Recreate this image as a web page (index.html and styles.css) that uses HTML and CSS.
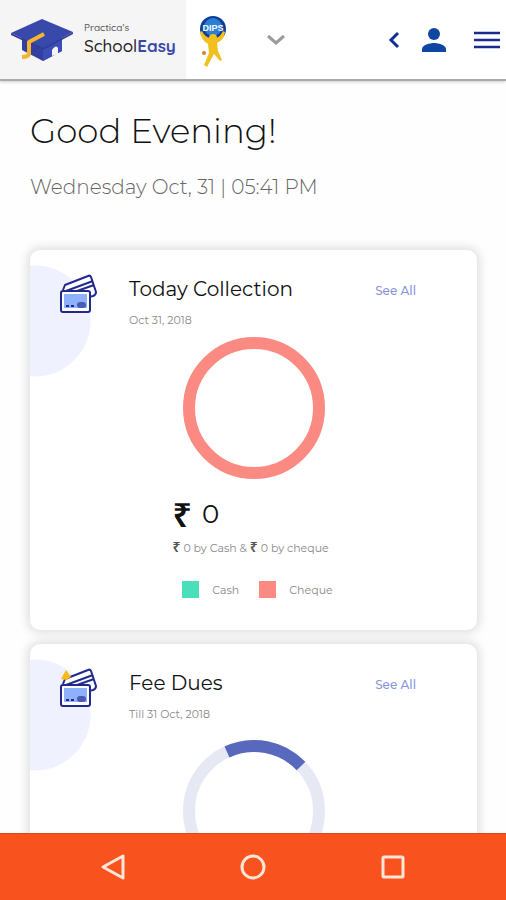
FILE: index.html
```
<!DOCTYPE html>
<html lang="en">
	<head>
		<meta charset="utf-8">
		<meta name="viewport" content="width=device-width, initial-scale=1">
		<title>SchoolEasy</title>
		<link rel="stylesheet" href="styles.css">
	</head>
	<body>

		<!-- header -->
		<header class="topbar">
			<a class="brand" href="#">
				<svg class="brand-cap" viewBox="0 0 64 44" aria-hidden="true">
					<path d="M12 18v14l21 11 19-10V18z" fill="#3440a0"/>
					<path d="M33 24v19l19-10V20z" fill="#3d4db6"/>
					<path d="M42 38v-6q4-6 6-2v6z" fill="#f5f5f5"/>
					<path d="M1 15L32 1l31 13-30 16z" fill="#3949ab"/>
					<path d="M1 15l32 15 30-16v2L33 32 1 17z" fill="#303c9a"/>
					<path d="M34 16l-15 8v12q-1 3-7 3" fill="none" stroke="#f6b52c" stroke-width="4" stroke-linejoin="round"/>
				</svg>
				<span class="brand-text">
					<span class="brand-owner">Practica's</span>
					<span class="brand-name">School<b>Easy</b></span>
				</span>
			</a>
			<svg class="school-logo" viewBox="0 0 28 52" aria-hidden="true">
				<circle cx="14" cy="14" r="13" fill="#0c3c9c"/>
				<circle cx="14" cy="12" r="9" fill="#2a7fd4"/>
				<text class="school-initials" x="14" y="16" text-anchor="middle">DIPS</text>
				<path d="M1 17q1 8 8 12l1 9-5 12 3 2 7-13 6 7 2-1-4-9-1-8q7-3 8-11l-2-1q-3 6-7 7h-6q-5-1-8-7z" fill="#f2c01e"/>
				<circle cx="14" cy="23" r="4" fill="#f2c01e"/>
				<circle cx="5" cy="38" r="2" fill="#e07b2a"/>
			</svg>
			<button class="icon-btn" type="button" aria-label="Choose school">
				<svg width="18" height="12" viewBox="0 0 18 12"><path d="M1 2l8 7 8-7" fill="none" stroke="#9b9b9b" stroke-width="3"/></svg>
			</button>
			<div class="topbar-actions">
				<button class="icon-btn" type="button" aria-label="Back">
					<svg width="12" height="18" viewBox="0 0 12 18"><path d="M10 2L3 9l7 7" fill="none" stroke="#12309a" stroke-width="3"/></svg>
				</button>
				<button class="icon-btn" type="button" aria-label="Profile">
					<svg width="24" height="24" viewBox="0 0 24 24" fill="#0d47a1"><circle cx="12" cy="6" r="6"/><path d="M0 24v-3c0-4 8-6 12-6s12 2 12 6v3z"/></svg>
				</button>
				<button class="icon-btn menu-btn" type="button" aria-label="Menu">
					<svg width="26" height="18" viewBox="0 0 26 18"><path d="M0 2h26M0 9h26M0 16h26" stroke="#1a2a8f" stroke-width="2.6"/></svg>
				</button>
			</div>
		</header>

		<!-- content -->
		<main class="content">
			<h1 class="greeting">Good Evening!</h1>
			<p class="now">Wednesday Oct, 31 | 05:41 PM</p>

			<section class="card">
				<div class="card-head">
					<svg class="card-icon" viewBox="0 0 40 40" aria-hidden="true">
						<g fill="#fff" stroke="#1f2a8c" stroke-width="2" stroke-linejoin="round">
							<path d="M4 16l2-5L29 2q2-1 3 1l5 15q0 3-3 4l-4 1"/>
							<path d="M7 17L34 7M18 17l17-6" fill="none"/>
							<rect x="2" y="17" width="29" height="21" rx="2"/>
						</g>
						<rect x="5" y="20" width="23" height="14" fill="#8fb0fb"/>
						<rect x="18" y="28" width="9" height="6" rx="3" fill="#4a5cb8"/>
						<path d="M7 32h3M12 32h3" stroke="#1f2a8c" stroke-width="2"/>
					</svg>
					<div class="card-titles">
						<h2 class="card-title">Today Collection</h2>
						<p class="card-date">Oct 31, 2018</p>
					</div>
					<a class="see-all" href="#">See All</a>
				</div>
				<svg class="ring" viewBox="0 0 142 142" role="img" aria-label="Collection chart">
					<circle cx="71" cy="71" r="65" fill="none" stroke="#fb8b82" stroke-width="12"/>
				</svg>
				<div class="totals">
					<p class="amount"><span class="rupee">₹</span>0</p>
					<p class="split"><span class="rupee">₹</span> 0 by Cash &amp; <span class="rupee">₹</span> 0 by cheque</p>
				</div>
				<ul class="legend">
					<li><span class="swatch cash"></span>Cash</li>
					<li><span class="swatch cheque"></span>Cheque</li>
				</ul>
			</section>

			<section class="card dues">
				<div class="card-head">
					<svg class="card-icon" viewBox="0 0 40 40" aria-hidden="true">
						<g fill="#fff" stroke="#1f2a8c" stroke-width="2" stroke-linejoin="round">
							<path d="M4 16l2-5L29 2q2-1 3 1l5 15q0 3-3 4l-4 1"/>
							<path d="M7 17L34 7M18 17l17-6" fill="none"/>
							<rect x="2" y="17" width="29" height="21" rx="2"/>
						</g>
						<rect x="5" y="20" width="23" height="14" fill="#8fb0fb"/>
						<rect x="18" y="28" width="9" height="6" rx="3" fill="#4a5cb8"/>
						<path d="M7 32h3M12 32h3" stroke="#1f2a8c" stroke-width="2"/>
						<path d="M2 11l5-9 5 7-5 3z" fill="#fbb917"/>
					</svg>
					<div class="card-titles">
						<h2 class="card-title">Fee Dues</h2>
						<p class="card-date">Till 31 Oct, 2018</p>
					</div>
					<a class="see-all" href="#">See All</a>
				</div>
				<svg class="ring" viewBox="0 0 142 142" role="img" aria-label="Fee dues chart">
					<circle cx="71" cy="71" r="65" fill="none" stroke="#e6e9f4" stroke-width="12"/>
					<path d="M44 12A65 65 0 0 1 118 26" fill="none" stroke="#5768bd" stroke-width="12"/>
				</svg>
			</section>
		</main>

		<!-- system buttons -->
		<nav class="navbar" aria-label="System">
			<button class="icon-btn" type="button" aria-label="Back">
				<svg width="26" height="28" viewBox="0 0 26 28"><path d="M23 3v22L3 14z"/></svg>
			</button>
			<button class="icon-btn" type="button" aria-label="Home">
				<svg width="26" height="28" viewBox="0 0 26 28"><circle cx="13" cy="14" r="11"/></svg>
			</button>
			<button class="icon-btn" type="button" aria-label="Recent apps">
				<svg width="26" height="28" viewBox="0 0 26 28"><rect x="3" y="4" width="20" height="20" rx="1"/></svg>
			</button>
		</nav>
	</body>
</html>
```
FILE: styles.css
```
* {
	box-sizing: border-box;
}

body {
	margin: 0;
	height: 100vh;
	display: flex;
	flex-direction: column;
	overflow: hidden;
	background-color: #fefefe;
	font-family: Montserrat, Inter, sans-serif;
	color: #111;
}

h1, h2, p, ul {
	margin: 0;
	padding: 0;
	font-weight: 400;
}

a {
	text-decoration: none;
}

.icon-btn {
	display: flex;
	padding: 0;
	border: 0;
	background: none;
}

/* header */
.topbar {
	display: flex;
	align-items: center;
	height: 81px;
	flex-shrink: 0;
	padding-right: 6px;
	background-color: #fff;
	border-bottom: 2px solid #aaa;
	box-shadow: 0 1px 3px rgba(0, 0, 0, 0.2);
}

.brand {
	display: flex;
	align-items: center;
	gap: 10px;
	width: 186px;
	height: 100%;
	padding-left: 10px;
	background-color: #f5f5f5;
	color: #222;
}

.brand-cap {
	width: 64px;
	height: 44px;
}

.brand-text {
	display: flex;
	flex-direction: column;
	font-family: Quicksand, Lato, sans-serif;
	font-weight: 500;
}

.brand-owner {
	font-size: 10px;
	line-height: 12px;
	color: #555;
}

.brand-name {
	font-size: 17px;
	line-height: 24px;
}

.brand-name b {
	color: #3949ab;
}

.school-logo {
	width: 28px;
	height: 52px;
	margin: 2px 40px 0 13px;
}

.school-initials {
	font: bold 9px "Liberation Sans", sans-serif;
	fill: #fff;
}

.topbar-actions {
	display: flex;
	align-items: center;
	gap: 22px;
	margin-left: auto;
}

.menu-btn {
	margin-left: 6px;
}

/* content */
.content {
	flex: 1;
	min-height: 0;
	overflow: hidden;
	padding: 30px 29px 0 30px;
}

.greeting {
	font-size: 34px;
	line-height: 40px;
	font-weight: 300;
}

.now {
	margin: 24px 0 51px;
	font-size: 20px;
	line-height: 24px;
	font-weight: 300;
	color: #666;
}

/* cards */
.card {
	min-height: 380px;
	margin-bottom: 14px;
	padding: 24px 29px 30px;
	border-radius: 10px;
	background: #fff radial-gradient(circle at 5px 71px, #eff1ff 55px, transparent 56px);
	box-shadow: 0 0 10px 3px rgba(0, 0, 0, 0.12);
}

.card-head {
	display: flex;
	gap: 30px;
	margin-bottom: 9px;
	padding-right: 32px;
}

.card-icon {
	width: 40px;
	height: 40px;
}

.card-titles {
	flex: 1;
}

.card-title {
	font-size: 20px;
	line-height: 30px;
}

.card-date {
	margin-top: 8px;
	font-size: 11px;
	line-height: 16px;
	color: #888;
}

.see-all {
	font-size: 12px;
	line-height: 34px;
	font-weight: 500;
	color: #8a95d8;
}

.ring {
	display: block;
	width: 142px;
	height: 142px;
	margin: 0 auto;
}

.dues .card-head {
	margin-bottom: 18px;
}

.totals {
	width: max-content;
	min-width: 162px;
	margin: 16px auto 0;
}

.rupee {
	font-family: "Noto Sans", sans-serif;
	font-weight: 600;
}

.amount {
	display: flex;
	gap: 10px;
	font-size: 26px;
	line-height: 38px;
}

.amount .rupee {
	font-size: 34px;
}

.split {
	margin-top: 6px;
	font-size: 11px;
	line-height: 18px;
	color: #888;
}

.split .rupee {
	font-size: 14px;
	line-height: 16px;
	color: #555;
}

.legend {
	display: flex;
	justify-content: center;
	gap: 20px;
	margin-top: 24px;
	padding-left: 8px;
	list-style: none;
	font-size: 11px;
	line-height: 18px;
	color: #888;
}

.legend li {
	display: flex;
	gap: 13px;
}

.swatch {
	width: 17px;
	height: 17px;
}

.cash {
	background-color: #48dfba;
}

.cheque {
	background-color: #fb8b82;
}

/* system buttons */
.navbar {
	display: flex;
	justify-content: center;
	align-items: center;
	gap: 114px;
	height: 67px;
	flex-shrink: 0;
	background-color: #f8521f;
	border-top: 1px solid #dd4615;
}

.navbar svg {
	fill: none;
	stroke: #ffe6d6;
	stroke-width: 3;
	stroke-linejoin: round;
}
```
